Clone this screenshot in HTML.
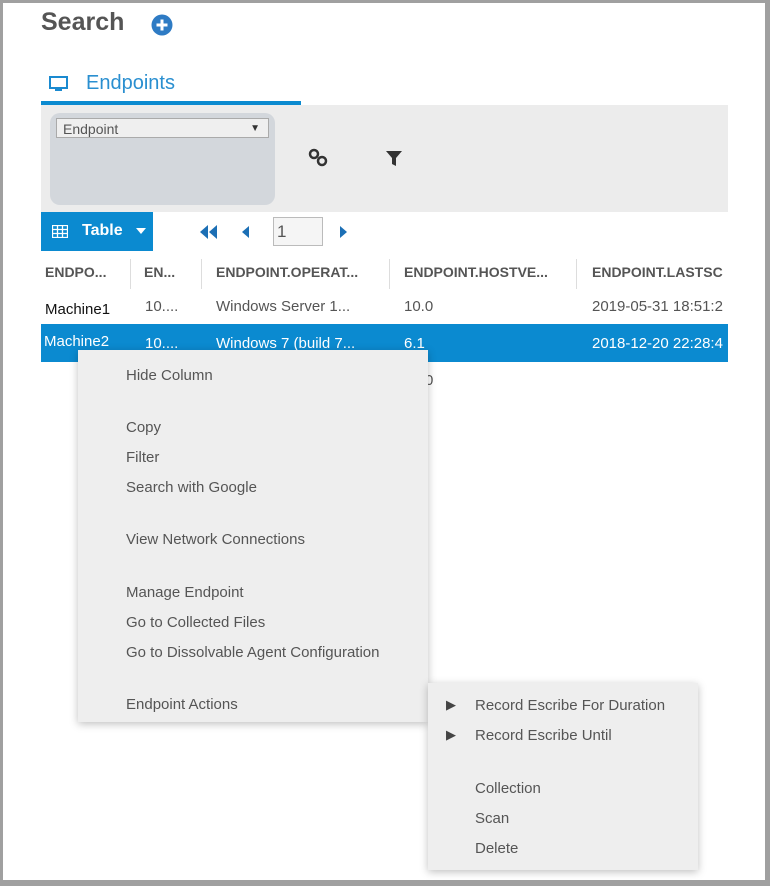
<!DOCTYPE html>
<html><head><meta charset="utf-8"><style>
body{margin:0;width:770px;height:886px;background:#a0a0a0;font-family:"Liberation Sans","DejaVu Sans",sans-serif;overflow:hidden;position:relative}
.frame{position:absolute;left:3px;top:3px;width:762px;height:877px;background:#fff;overflow:hidden}
.abs{position:absolute}
.t{color:#555;font-size:15px;white-space:nowrap}
.menu{position:absolute;background:#eeeeee;box-shadow:0 2px 8px rgba(0,0,0,.25)}
.menu div{position:absolute;color:#555;font-size:15px;white-space:nowrap}
</style></head><body>
<div class="frame">
<div class="abs" style="left:38px;top:5px;font-size:25px;font-weight:bold;color:#555">Search</div>
<svg class="abs" style="left:148px;top:11px" width="22" height="22"><circle cx="11" cy="11" r="10.5" fill="#2e7bc4"/><path d="M11 5.5v11M5.5 11h11" stroke="#fff" stroke-width="3"/></svg>
<svg class="abs" style="left:46px;top:73px" width="19" height="17"><rect x="1" y="1" width="17" height="11" fill="none" stroke="#1a8ad0" stroke-width="2"/><rect x="6" y="12" width="7" height="3" fill="#1a8ad0"/></svg>
<div class="abs" style="left:83px;top:69px;font-size:20px;color:#2a8fd0">Endpoints</div>
<div class="abs" style="left:38px;top:98px;width:260px;height:4px;background:#0b8ad0"></div>
<div class="abs" style="left:38px;top:102px;width:687px;height:107px;background:#ececec"></div>
<div class="abs" style="left:47px;top:110px;width:225px;height:92px;background:#d3d7dc;border-radius:10px"></div>
<div class="abs" style="left:53px;top:115px;width:213px;height:20px;background:#efefef;border:1px solid #aaa;box-sizing:border-box;font-size:14px;color:#555;padding-left:6px;line-height:20px">Endpoint<span style="position:absolute;right:8px;font-size:10px;color:#333">▼</span></div>
<svg class="abs" style="left:305px;top:145px" width="22" height="20"><circle cx="6" cy="6" r="4" fill="none" stroke="#333" stroke-width="2.5"/><circle cx="14" cy="13" r="4" fill="none" stroke="#333" stroke-width="2.5"/></svg>
<svg class="abs" style="left:382px;top:147px" width="18" height="17"><path d="M1 1h16l-6 7v8l-4-2v-6z" fill="#333"/></svg>
<div class="abs" style="left:38px;top:209px;width:112px;height:39px;background:#0b8ad0"></div>
<svg class="abs" style="left:49px;top:222px" width="16" height="13"><path d="M0.5 0.5h15v12h-15zM0.5 4.5h15M0.5 8.5h15M5.5 .5v12M10.5 .5v12" fill="none" stroke="#fff" stroke-width="1.3"/></svg>
<div class="abs" style="left:79px;top:219px;font-size:16px;font-weight:bold;color:#fff">Table</div>
<svg class="abs" style="left:133px;top:225px" width="10" height="6"><path d="M0 0h10L5 6z" fill="#fff"/></svg>
<svg class="abs" style="left:196px;top:222px" width="20" height="14"><path d="M9 0v14L1 7zM18 0v14L10 7z" fill="#1c6fb5"/></svg>
<svg class="abs" style="left:239px;top:223px" width="7" height="12"><path d="M7 0v12L0 6z" fill="#1c6fb5"/></svg>
<div class="abs" style="left:270px;top:214px;width:50px;height:29px;border:1px solid #bbb;background:#f5f5f5;box-sizing:border-box;font-size:17px;color:#555;padding-left:3px;line-height:27px">1</div>
<svg class="abs" style="left:337px;top:223px" width="7" height="12"><path d="M0 0v12L7 6z" fill="#1c6fb5"/></svg>
<div class="t abs" style="left:42px;top:261px;font-weight:bold;font-size:14px">ENDPO...</div>
<div class="abs" style="left:127px;top:256px;width:1px;height:30px;background:#ddd"></div>
<div class="t abs" style="left:141px;top:261px;font-weight:bold;font-size:14px">EN...</div>
<div class="abs" style="left:198px;top:256px;width:1px;height:30px;background:#ddd"></div>
<div class="t abs" style="left:213px;top:261px;font-weight:bold;font-size:14px">ENDPOINT.OPERAT...</div>
<div class="abs" style="left:386px;top:256px;width:1px;height:30px;background:#ddd"></div>
<div class="t abs" style="left:401px;top:261px;font-weight:bold;font-size:14px">ENDPOINT.HOSTVE...</div>
<div class="abs" style="left:573px;top:256px;width:1px;height:30px;background:#ddd"></div>
<div class="t abs" style="left:589px;top:261px;font-weight:bold;font-size:14px">ENDPOINT.LASTSC</div>
<div class="t abs" style="left:42px;top:298px;color:#111">Machine1</div>
<div class="t abs" style="left:142px;top:295px">10....</div>
<div class="t abs" style="left:213px;top:295px">Windows Server 1...</div>
<div class="t abs" style="left:401px;top:295px">10.0</div>
<div class="t abs" style="left:589px;top:295px">2019-05-31 18:51:2</div>
<div class="abs" style="left:38px;top:321px;width:687px;height:38px;background:#0b8ad0"></div>
<div class="t abs" style="left:41px;top:330px;color:#fff">Machine2</div>
<div class="t abs" style="left:142px;top:332px;color:#fff">10....</div>
<div class="t abs" style="left:213px;top:332px;color:#fff">Windows 7 (build 7...</div>
<div class="t abs" style="left:401px;top:332px;color:#fff">6.1</div>
<div class="t abs" style="left:589px;top:332px;color:#fff">2018-12-20 22:28:4</div>
<div class="t abs" style="left:422px;top:369px">0</div>
<div class="menu" style="left:75px;top:347px;width:350px;height:372px">
<div style="left:48px;top:17px">Hide Column</div>
<div style="left:48px;top:69px">Copy</div>
<div style="left:48px;top:99px">Filter</div>
<div style="left:48px;top:129px">Search with Google</div>
<div style="left:48px;top:181px">View Network Connections</div>
<div style="left:48px;top:234px">Manage Endpoint</div>
<div style="left:48px;top:264px">Go to Collected Files</div>
<div style="left:48px;top:294px">Go to Dissolvable Agent Configuration</div>
<div style="left:48px;top:346px">Endpoint Actions</div>
</div>
<div class="menu" style="left:425px;top:680px;width:270px;height:187px">
<div style="left:18px;top:14px;font-size:13px;color:#444">▶</div>
<div style="left:47px;top:14px">Record Escribe For Duration</div>
<div style="left:18px;top:44px;font-size:13px;color:#444">▶</div>
<div style="left:47px;top:44px">Record Escribe Until</div>
<div style="left:47px;top:97px">Collection</div>
<div style="left:47px;top:127px">Scan</div>
<div style="left:47px;top:157px">Delete</div>
</div>
</div>
</body></html>
